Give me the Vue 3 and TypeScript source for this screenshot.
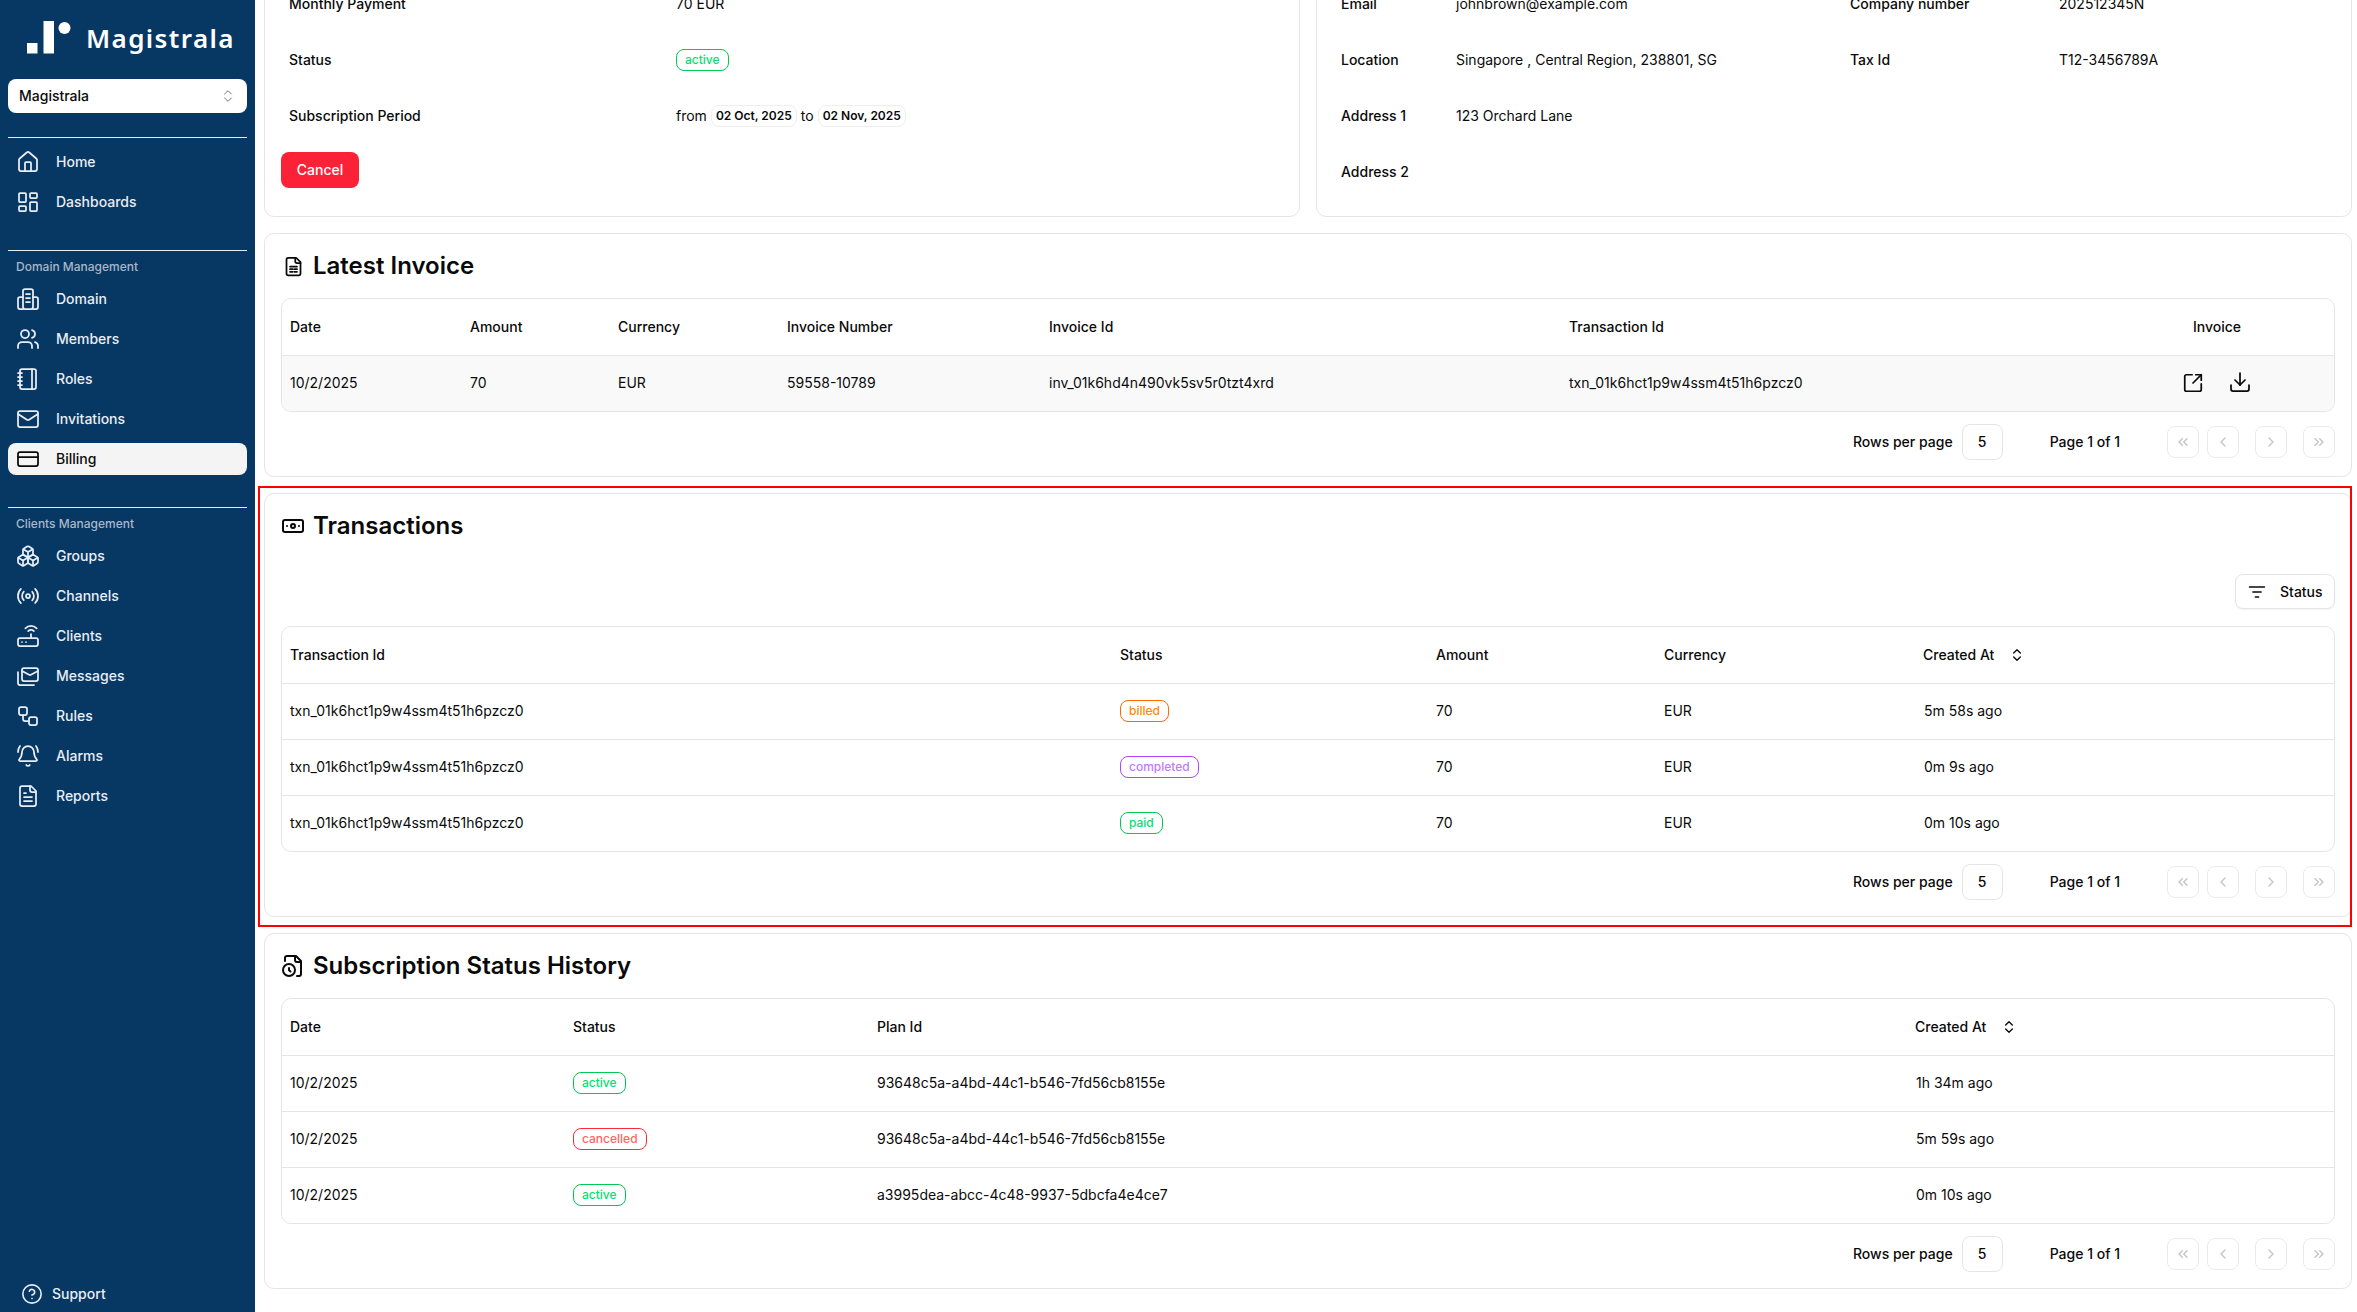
<script setup lang="ts">
const icons: Record<string, string> = {
  home: '<path d="M15 21v-8a1 1 0 0 0-1-1h-4a1 1 0 0 0-1 1v8"/><path d="M3 10a2 2 0 0 1 .709-1.528l7-5.999a2 2 0 0 1 2.582 0l7 5.999A2 2 0 0 1 21 10v9a2 2 0 0 1-2 2H5a2 2 0 0 1-2-2z"/>',
  dash: '<rect x="3" y="3" width="7" height="9" rx="1"/><rect x="14" y="3" width="7" height="5" rx="1"/><rect x="14" y="12" width="7" height="9" rx="1"/><rect x="3" y="16" width="7" height="5" rx="1"/>',
  domain: '<rect x="7" y="2" width="10" height="20" rx="2"/><path d="M10 7h4M10 11h4M10 15h4M7 10H4a2 2 0 0 0-2 2v8a2 2 0 0 0 2 2h3M17 10h3a2 2 0 0 1 2 2v8a2 2 0 0 1-2 2h-3"/>',
  users: '<path d="M16 21v-2a4 4 0 0 0-4-4H6a4 4 0 0 0-4 4v2"/><circle cx="9" cy="7" r="4"/><path d="M22 21v-2a4 4 0 0 0-3-3.87"/><path d="M16 3.13a4 4 0 0 1 0 7.75"/>',
  notebook: '<path d="M2 6h4M2 10h4M2 14h4M2 18h4"/><rect x="4" y="2" width="16" height="20" rx="2"/><path d="M16 2v20"/>',
  mail: '<rect x="2" y="4" width="20" height="16" rx="2"/><path d="m22 7-8.97 5.7a1.94 1.94 0 0 1-2.06 0L2 7"/>',
  card: '<rect x="2" y="5" width="20" height="14" rx="2"/><path d="M2 10h20"/>',
  boxes: '<path d="M2.97 12.92A2 2 0 0 0 2 14.63v3.24a2 2 0 0 0 .97 1.71l3 1.8a2 2 0 0 0 2.06 0L12 19v-5.5l-5-3-4.03 2.42Z"/><path d="m7 16.5-4.74-2.85M7 16.5l5-3M7 16.5v5.17"/><path d="M12 13.5V19l3.97 2.38a2 2 0 0 0 2.06 0l3-1.8a2 2 0 0 0 .97-1.71v-3.24a2 2 0 0 0-.97-1.71L17 10.5l-5 3Z"/><path d="m17 16.5-5-3M17 16.5l4.74-2.85M17 16.5v5.17"/><path d="M7.97 4.42A2 2 0 0 0 7 6.13v4.37l5 3 5-3V6.13a2 2 0 0 0-.97-1.71l-3-1.8a2 2 0 0 0-2.06 0l-3 1.8Z"/><path d="M12 8 7.26 5.15M12 8l4.74-2.85M12 13.5V8"/>',
  radio: '<path d="M4.9 19.1C1 15.2 1 8.8 4.9 4.9"/><path d="M7.8 16.2c-2.3-2.3-2.3-6.1 0-8.5"/><circle cx="12" cy="12" r="2"/><path d="M16.2 7.8c2.3 2.3 2.3 6.1 0 8.5"/><path d="M19.1 4.9C23 8.8 23 15.1 19.1 19"/>',
  router: '<rect x="2" y="14" width="20" height="8" rx="2"/><path d="M6.01 18H6M10.01 18H10M15 10v4"/><path d="M17.84 7.17a4 4 0 0 0-5.66 0"/><path d="M20.66 4.34a8 8 0 0 0-11.31 0"/>',
  mails: '<rect x="6" y="4" width="16" height="13" rx="2"/><path d="m22 7-7.1 3.78c-.57.3-1.23.3-1.8 0L6 7"/><path d="M2 8v11c0 1.1.9 2 2 2h14"/>',
  flow: '<rect x="3" y="3" width="8" height="8" rx="2"/><path d="M7 11v4a2 2 0 0 0 2 2h4"/><rect x="13" y="13" width="8" height="8" rx="2"/>',
  bell: '<path d="M10.268 21a2 2 0 0 0 3.464 0"/><path d="M22 8c0-2.3-.8-4.3-2-6"/><path d="M3.262 15.326A1 1 0 0 0 4 17h16a1 1 0 0 0 .74-1.673C19.41 13.956 18 12.499 18 8A6 6 0 0 0 6 8c0 4.499-1.411 5.956-2.738 7.326"/><path d="M4 2C2.8 3.7 2 5.7 2 8"/>',
  file: '<path d="M15 2H6a2 2 0 0 0-2 2v16a2 2 0 0 0 2 2h12a2 2 0 0 0 2-2V7Z"/><path d="M14 2v4a2 2 0 0 0 2 2h4"/><path d="M10 9H8M16 13H8M16 17H8"/>',
  help: '<circle cx="12" cy="12" r="10"/><path d="M9.09 9a3 3 0 0 1 5.83 1c0 2-3 3-3 3"/><path d="M12 17h.01"/>',
  sheet: '<path d="M15 2H6a2 2 0 0 0-2 2v16a2 2 0 0 0 2 2h12a2 2 0 0 0 2-2V7Z"/><path d="M14 2v4a2 2 0 0 0 2 2h4"/><path d="M8 12h8M8 15h3M13 15h3M8 18h3M13 18h3"/>',
  note: '<rect x="2" y="6" width="20" height="12" rx="2"/><circle cx="12" cy="12" r="2"/><path d="M6 12h.01M18 12h.01"/>',
  clock: '<path d="M14 2v4a2 2 0 0 0 2 2h4"/><path d="M16 22h2a2 2 0 0 0 2-2V7l-5-5H6a2 2 0 0 0-2 2v3"/><circle cx="8" cy="16" r="6"/><path d="M9.5 17.5 8 16.25V14"/>',
  open: '<path d="M21 13v6a2 2 0 0 1-2 2H5a2 2 0 0 1-2-2V5a2 2 0 0 1 2-2h6"/><path d="m21 3-9 9"/><path d="M15 3h6v6"/>',
  download: '<path d="M21 15v4a2 2 0 0 1-2 2H5a2 2 0 0 1-2-2v-4"/><path d="m7 10 5 5 5-5"/><path d="M12 15V3"/>',
  filter: '<path d="M3 6h18M7 12h10M10 18h4"/>',
  sort: '<path d="m7 15 5 5 5-5"/><path d="m7 9 5-5 5 5"/>',
  first: '<path d="m11 17-5-5 5-5"/><path d="m18 17-5-5 5-5"/>',
  prev: '<path d="m15 18-6-6 6-6"/>',
  next: '<path d="m9 18 6-6-6-6"/>',
  last: '<path d="m6 17 5-5-5-5"/><path d="m13 17 5-5-5-5"/>',
}

const mainNav = [
  { label: 'Home', icon: 'home' },
  { label: 'Dashboards', icon: 'dash' },
]
const domainNav = [
  { label: 'Domain', icon: 'domain' },
  { label: 'Members', icon: 'users' },
  { label: 'Roles', icon: 'notebook' },
  { label: 'Invitations', icon: 'mail' },
  { label: 'Billing', icon: 'card', active: true },
]
const clientNav = [
  { label: 'Groups', icon: 'boxes' },
  { label: 'Channels', icon: 'radio' },
  { label: 'Clients', icon: 'router' },
  { label: 'Messages', icon: 'mails' },
  { label: 'Rules', icon: 'flow' },
  { label: 'Alarms', icon: 'bell' },
  { label: 'Reports', icon: 'file' },
]
const pager = ['first', 'prev', 'next', 'last']

const txn = 'txn_01k6hct1p9w4ssm4t51h6pzcz0'
const transactions = [
  { status: 'billed', age: '5m 58s ago' },
  { status: 'completed', age: '0m 9s ago' },
  { status: 'paid', age: '0m 10s ago' },
]
const history = [
  { status: 'active', plan: '93648c5a-a4bd-44c1-b546-7fd56cb8155e', age: '1h 34m ago' },
  { status: 'cancelled', plan: '93648c5a-a4bd-44c1-b546-7fd56cb8155e', age: '5m 59s ago' },
  { status: 'active', plan: 'a3995dea-abcc-4c48-9937-5dbcfa4e4ce7', age: '0m 10s ago' },
]
</script>

<template>
  <div class="layout">
    <aside class="sidebar">
      <div class="logo">
        <svg class="logo-mark" viewBox="0 0 44 33" width="44" height="33">
          <rect x="0" y="22" width="10.5" height="10.5" fill="#fff" />
          <rect x="16.5" y="0" width="10.5" height="32.5" fill="#fff" />
          <circle cx="37.5" cy="7" r="6" fill="#fff" />
        </svg>
        <span class="logo-text">Magistrala</span>
      </div>
      <div class="org-select">
        <span>Magistrala</span>
        <svg class="ic sel-ic" viewBox="0 0 24 24" v-html="icons.sort"></svg>
      </div>
      <hr class="rule first-rule" />
      <nav class="nav">
        <div v-for="n in mainNav" :key="n.label" class="nav-item">
          <div class="nav-inner">
            <svg class="ic nav-ic" viewBox="0 0 24 24" v-html="icons[n.icon]"></svg>
            <span>{{ n.label }}</span>
          </div>
        </div>
      </nav>
      <hr class="rule group-rule" />
      <div class="group-label">Domain Management</div>
      <nav class="nav">
        <div v-for="n in domainNav" :key="n.label" class="nav-item">
          <div class="nav-inner" :class="{ active: n.active }">
            <svg class="ic nav-ic" viewBox="0 0 24 24" v-html="icons[n.icon]"></svg>
            <span>{{ n.label }}</span>
          </div>
        </div>
      </nav>
      <hr class="rule group-rule" />
      <div class="group-label">Clients Management</div>
      <nav class="nav">
        <div v-for="n in clientNav" :key="n.label" class="nav-item">
          <div class="nav-inner">
            <svg class="ic nav-ic" viewBox="0 0 24 24" v-html="icons[n.icon]"></svg>
            <span>{{ n.label }}</span>
          </div>
        </div>
      </nav>
      <div class="support">
        <svg class="ic support-ic" viewBox="0 0 24 24" v-html="icons.help"></svg>
        <span>Support</span>
      </div>
    </aside>

    <main class="main">
      <div class="top-row">
        <section class="card left-card">
          <div class="info-row plan-row">
            <span class="lbl">Monthly Payment</span><span>70 EUR</span>
          </div>
          <div class="info-row plan-row">
            <span class="lbl">Status</span>
            <span><span class="badge active">active</span></span>
          </div>
          <div class="info-row plan-row">
            <span class="lbl">Subscription Period</span>
            <span class="period">from <b class="pill">02 Oct, 2025</b> to <b class="pill">02 Nov, 2025</b></span>
          </div>
          <button class="cancel">Cancel</button>
        </section>
        <section class="card right-card">
          <div class="info-row cust-row">
            <span class="lbl">Email</span><span>johnbrown@example.com</span>
            <span class="lbl">Company number</span><span>202512345N</span>
          </div>
          <div class="info-row cust-row">
            <span class="lbl">Location</span><span>Singapore , Central Region, 238801, SG</span>
            <span class="lbl">Tax Id</span><span>T12-3456789A</span>
          </div>
          <div class="info-row cust-row">
            <span class="lbl">Address 1</span><span>123 Orchard Lane</span>
          </div>
          <div class="info-row cust-row">
            <span class="lbl">Address 2</span>
          </div>
        </section>
      </div>

      <section class="card">
        <h2 class="title">
          <svg class="ic title-ic sheet-ic" viewBox="0 0 24 24" v-html="icons.sheet"></svg>Latest Invoice
        </h2>
        <div class="table-wrap">
          <table>
            <colgroup>
              <col style="width: 180px" /><col style="width: 148px" /><col style="width: 169px" />
              <col style="width: 262px" /><col style="width: 520px" /><col style="width: 624px" /><col />
            </colgroup>
            <thead>
              <tr>
                <th>Date</th><th>Amount</th><th>Currency</th><th>Invoice Number</th>
                <th>Invoice Id</th><th>Transaction Id</th><th>Invoice</th>
              </tr>
            </thead>
            <tbody>
              <tr class="hover">
                <td>10/2/2025</td><td>70</td><td>EUR</td><td>59558-10789</td>
                <td>inv_01k6hd4n490vk5sv5r0tzt4xrd</td>
                <td>{{ txn }}</td>
                <td>
                  <div class="inv-actions">
                    <svg class="ic open-ic" viewBox="0 0 24 24" v-html="icons.open"></svg>
                    <svg class="ic dl-ic" viewBox="0 0 24 24" v-html="icons.download"></svg>
                  </div>
                </td>
              </tr>
            </tbody>
          </table>
        </div>
        <div class="pagination">
          <span>Rows per page</span>
          <div class="page-size">5</div>
          <span class="page-of">Page 1 of 1</span>
          <div class="pager">
            <button v-for="p in pager" :key="p" class="pg-btn" :class="p">
              <svg class="ic pg-ic" viewBox="0 0 24 24" v-html="icons[p]"></svg>
            </button>
          </div>
        </div>
      </section>

      <section class="card tx-card">
        <div class="annotation"></div>
        <h2 class="title tx-title">
          <svg class="ic title-ic" viewBox="0 0 24 24" v-html="icons.note"></svg>Transactions
        </h2>
        <div class="filter-row">
          <button class="filter-btn">
            <svg class="ic filter-ic" viewBox="0 0 24 24" v-html="icons.filter"></svg>Status
          </button>
        </div>
        <div class="table-wrap">
          <table>
            <colgroup>
              <col style="width: 830px" /><col style="width: 316px" /><col style="width: 228px" />
              <col style="width: 260px" /><col />
            </colgroup>
            <thead>
              <tr>
                <th>Transaction Id</th><th>Status</th><th>Amount</th><th>Currency</th>
                <th><span class="sort-head">Created At<svg class="ic sort-ic" viewBox="0 0 24 24" v-html="icons.sort"></svg></span></th>
              </tr>
            </thead>
            <tbody>
              <tr v-for="t in transactions" :key="t.status">
                <td>{{ txn }}</td>
                <td><span class="badge" :class="t.status">{{ t.status }}</span></td>
                <td>70</td><td>EUR</td><td>{{ t.age }}</td>
              </tr>
            </tbody>
          </table>
        </div>
        <div class="pagination">
          <span>Rows per page</span>
          <div class="page-size">5</div>
          <span class="page-of">Page 1 of 1</span>
          <div class="pager">
            <button v-for="p in pager" :key="p" class="pg-btn" :class="p">
              <svg class="ic pg-ic" viewBox="0 0 24 24" v-html="icons[p]"></svg>
            </button>
          </div>
        </div>
      </section>

      <section class="card">
        <h2 class="title">
          <svg class="ic title-ic" viewBox="0 0 24 24" v-html="icons.clock"></svg>Subscription Status History
        </h2>
        <div class="table-wrap">
          <table>
            <colgroup>
              <col style="width: 283px" /><col style="width: 304px" /><col style="width: 1039px" /><col />
            </colgroup>
            <thead>
              <tr>
                <th>Date</th><th>Status</th><th>Plan Id</th>
                <th><span class="sort-head">Created At<svg class="ic sort-ic" viewBox="0 0 24 24" v-html="icons.sort"></svg></span></th>
              </tr>
            </thead>
            <tbody>
              <tr v-for="h in history" :key="h.age">
                <td>10/2/2025</td>
                <td><span class="badge" :class="h.status">{{ h.status }}</span></td>
                <td>{{ h.plan }}</td><td>{{ h.age }}</td>
              </tr>
            </tbody>
          </table>
        </div>
        <div class="pagination">
          <span>Rows per page</span>
          <div class="page-size">5</div>
          <span class="page-of">Page 1 of 1</span>
          <div class="pager">
            <button v-for="p in pager" :key="p" class="pg-btn" :class="p">
              <svg class="ic pg-ic" viewBox="0 0 24 24" v-html="icons[p]"></svg>
            </button>
          </div>
        </div>
      </section>
    </main>
  </div>
</template>

<style>
html,
body {
  margin: 0;
  height: 100%;
  overflow: hidden;
  background: #fff;
}
</style>

<style scoped>
.layout {
  display: flex;
  height: 1312px;
  overflow: hidden;
  font-family: Inter, "Liberation Sans", sans-serif;
  font-size: 14px;
  line-height: 20px;
  color: #0a0a0a;
}
.ic {
  fill: none;
  stroke: currentColor;
  stroke-width: 2;
  stroke-linecap: round;
  stroke-linejoin: round;
  flex: none;
  display: block;
}

/* Sidebar */
.sidebar {
  width: 255px;
  flex: none;
  box-sizing: border-box;
  background: #073763;
  color: #e9eef4;
  padding: 0 8px;
  display: flex;
  flex-direction: column;
  font-weight: 500;
}
.logo {
  height: 79px;
  display: flex;
  align-items: flex-start;
  padding: 21px 0 0 19px;
  box-sizing: border-box;
}
.logo-mark {
  flex: none;
}
.logo-text {
  margin: 2px 0 0 15px;
  font-family: "Noto Sans", sans-serif;
  font-size: 26px;
  line-height: 30px;
  font-weight: 600;
  letter-spacing: 1.4px;
  color: #fff;
}
.org-select {
  height: 34px;
  flex: none;
  background: #fff;
  color: #0a0a0a;
  border-radius: 8px;
  display: flex;
  align-items: center;
  justify-content: space-between;
  padding: 0 11px;
}
.sel-ic {
  width: 16px;
  height: 16px;
  color: #737373;
  stroke-width: 1.5;
}
.rule {
  border: 0;
  height: 1px;
  background: #e6ebf0;
  margin: 0;
  flex: none;
}
.first-rule {
  margin: 24px 0 4px;
}
.group-rule {
  margin-top: 28px;
}
.group-label {
  height: 28px;
  padding: 6px 8px 0;
  box-sizing: border-box;
  font-size: 12px;
  line-height: 20px;
  color: #a8b8c9;
}
.nav-item {
  height: 40px;
  display: flex;
  align-items: center;
}
.nav-inner {
  height: 32px;
  width: 100%;
  display: flex;
  align-items: center;
  padding-left: 8px;
  border-radius: 8px;
  box-sizing: border-box;
}
.nav-inner.active {
  background: #f4f4f5;
  color: #0a0a0a;
}
.nav-ic {
  width: 24px;
  height: 24px;
  margin-right: 16px;
  stroke-width: 1.75;
}
.support {
  margin-top: auto;
  height: 36px;
  display: flex;
  align-items: center;
  padding: 0 0 0 13px;
}
.support-ic {
  width: 22px;
  height: 22px;
  margin-right: 9px;
  stroke-width: 1.75;
}

/* Main */
.main {
  flex: 1;
  min-width: 0;
  padding: 0 5px 0 9px;
  display: flex;
  flex-direction: column;
  gap: 16px;
}
.card {
  border: 1px solid #e5e5e5;
  border-radius: 10px;
  padding: 16px;
  background: #fff;
  position: relative;
}
.top-row {
  display: flex;
  gap: 16px;
  margin-top: -41px;
}
.left-card {
  width: 1036px;
  box-sizing: border-box;
  flex: none;
}
.right-card {
  flex: 1;
  min-width: 0;
}
.info-row {
  display: grid;
  height: 56px;
  align-items: center;
}
.plan-row {
  grid-template-columns: 387px 1fr;
  padding-left: 8px;
}
.cust-row {
  grid-template-columns: 115px 394px 209px 1fr;
  padding-left: 8px;
}
.lbl {
  font-weight: 500;
}
.period {
  display: flex;
  align-items: center;
  gap: 4px;
}
.pill {
  font-size: 12px;
  font-weight: 600;
  line-height: 20px;
  border: 1px solid #eee;
  border-radius: 8px;
  padding: 0 4px;
}
.cancel {
  display: block;
  margin-top: 8px;
  width: 78px;
  height: 36px;
  border: 0;
  border-radius: 8px;
  background: #fb2136;
  color: #fff;
  font: 500 14px/20px Inter, sans-serif;
  padding: 0;
}
.title {
  margin: 0 0 16px;
  height: 32px;
  display: flex;
  align-items: center;
  gap: 8px;
  font-size: 24px;
  line-height: 32px;
  font-weight: 600;
}
.tx-title {
  margin-bottom: 32px;
}
.title-ic {
  width: 24px;
  height: 24px;
}
.sheet-ic {
  width: 21px;
  height: 21px;
  margin: 0 1.5px;
}
.annotation {
  position: absolute;
  left: -7px;
  right: -1px;
  top: -8px;
  bottom: -11px;
  border: 2px solid #f00;
  pointer-events: none;
}
.filter-row {
  display: flex;
  justify-content: flex-end;
  margin-bottom: 17px;
}
.filter-btn {
  width: 100px;
  height: 35px;
  display: flex;
  align-items: center;
  padding: 0 0 0 11px;
  gap: 13px;
  background: #fff;
  border: 1px solid #e5e5e5;
  border-radius: 8px;
  box-shadow: 0 1px 2px rgba(0, 0, 0, 0.05);
  font: 500 14px/20px Inter, sans-serif;
  color: #0a0a0a;
  box-sizing: border-box;
}
.filter-ic {
  width: 20px;
  height: 20px;
  stroke-width: 1.75;
}
.table-wrap {
  border: 1px solid #e5e5e5;
  border-radius: 10px;
  overflow: hidden;
}
table {
  width: 100%;
  border-collapse: separate;
  border-spacing: 0;
  table-layout: fixed;
}
th,
td {
  box-sizing: border-box;
  text-align: left;
  padding: 0 8px;
  vertical-align: middle;
  white-space: nowrap;
  border-bottom: 1px solid #e5e5e5;
}
th {
  height: 57px;
  font-weight: 500;
}
td {
  height: 56px;
  padding-bottom: 1px;
  font-weight: 400;
}
tbody tr:last-child td {
  border-bottom: 0;
  height: 55px;
}
.hover td {
  background: #f9f9f9;
}
.badge {
  display: inline-flex;
  align-items: center;
  height: 22px;
  box-sizing: border-box;
  padding: 0 8px;
  border: 1px solid;
  border-radius: 8px;
  font-size: 12px;
  font-weight: 500;
  line-height: 16px;
  vertical-align: middle;
}
.badge.active,
.badge.paid {
  border-color: #00c950;
  color: #05df72;
}
.badge.cancelled {
  border-color: #fb2c36;
  color: #ff6467;
}
.badge.billed {
  border-color: #ff6900;
  color: #ff8904;
}
.badge.completed {
  border-color: #ad46ff;
  color: #c27aff;
}
.inv-actions {
  display: flex;
  align-items: center;
  margin-left: -11px;
}
.open-ic {
  width: 22px;
  height: 22px;
  stroke-width: 1.9;
}
.dl-ic {
  width: 24px;
  height: 24px;
  margin: -2px 0 0 24px;
  stroke-width: 1.75;
}
.sort-head {
  display: inline-flex;
  align-items: center;
  gap: 15px;
  margin-left: -1px;
}
.sort-ic {
  width: 16px;
  height: 16px;
}
.pagination {
  display: flex;
  align-items: center;
  justify-content: flex-end;
  height: 36px;
  margin-top: 12px;
  font-weight: 500;
}
.page-size {
  width: 41px;
  height: 36px;
  box-sizing: border-box;
  margin-left: 9px;
  border: 1px solid #e5e5e5;
  border-radius: 8px;
  display: flex;
  align-items: center;
  justify-content: center;
}
.page-of {
  margin-left: 47px;
}
.pager {
  margin-left: 47px;
  display: flex;
  gap: 16px;
}
.pg-btn {
  width: 32px;
  height: 32px;
  padding: 0;
  background: #fff;
  border: 1px solid #ebebeb;
  border-radius: 8px;
  color: #c4c4c4;
  display: flex;
  align-items: center;
  justify-content: center;
}
.pg-btn.first {
  margin-right: -8px;
}
.pg-ic {
  width: 16px;
  height: 16px;
}
</style>
